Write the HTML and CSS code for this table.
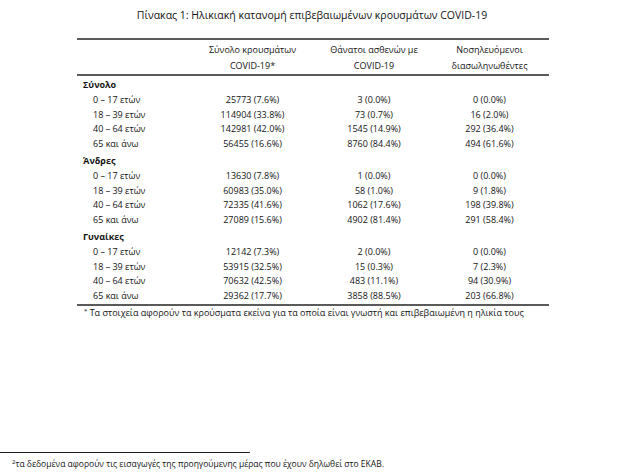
FILE: index.html
```html
<!DOCTYPE html>
<html lang="el">
<head>
<meta charset="utf-8">
<link rel="stylesheet" href="styles.css">
</head>
<body>
<div class="page">
  <h1 class="title">Πίνακας 1: Ηλικιακή κατανομή επιβεβαιωμένων κρουσμάτων COVID-19</h1>
  <table class="data">
    <colgroup>
      <col class="c-label"><col class="c-a"><col class="c-b"><col class="c-c">
    </colgroup>
    <thead>
      <tr>
        <th></th>
        <th>Σύνολο κρουσμάτων<br>COVID-19*</th>
        <th>Θάνατοι ασθενών με<br>COVID-19</th>
        <th>Νοσηλευόμενοι<br>διασωληνωθέντες</th>
      </tr>
    </thead>
    <tbody>
      <tr class="sec"><td>Σύνολο</td><td></td><td></td><td></td></tr>
      <tr><td>0 – 17 ετών</td><td>25773 (7.6%)</td><td>3 (0.0%)</td><td>0 (0.0%)</td></tr>
      <tr><td>18 – 39 ετών</td><td>114904 (33.8%)</td><td>73 (0.7%)</td><td>16 (2.0%)</td></tr>
      <tr><td>40 – 64 ετών</td><td>142981 (42.0%)</td><td>1545 (14.9%)</td><td>292 (36.4%)</td></tr>
      <tr><td>65 και άνω</td><td>56455 (16.6%)</td><td>8760 (84.4%)</td><td>494 (61.6%)</td></tr>
      <tr class="sec"><td>Άνδρες</td><td></td><td></td><td></td></tr>
      <tr><td>0 – 17 ετών</td><td>13630 (7.8%)</td><td>1 (0.0%)</td><td>0 (0.0%)</td></tr>
      <tr><td>18 – 39 ετών</td><td>60983 (35.0%)</td><td>58 (1.0%)</td><td>9 (1.8%)</td></tr>
      <tr><td>40 – 64 ετών</td><td>72335 (41.6%)</td><td>1062 (17.6%)</td><td>198 (39.8%)</td></tr>
      <tr><td>65 και άνω</td><td>27089 (15.6%)</td><td>4902 (81.4%)</td><td>291 (58.4%)</td></tr>
      <tr class="sec"><td>Γυναίκες</td><td></td><td></td><td></td></tr>
      <tr><td>0 – 17 ετών</td><td>12142 (7.3%)</td><td>2 (0.0%)</td><td>0 (0.0%)</td></tr>
      <tr><td>18 – 39 ετών</td><td>53915 (32.5%)</td><td>15 (0.3%)</td><td>7 (2.3%)</td></tr>
      <tr><td>40 – 64 ετών</td><td>70632 (42.5%)</td><td>483 (11.1%)</td><td>94 (30.9%)</td></tr>
      <tr class="last"><td>65 και άνω</td><td>29362 (17.7%)</td><td>3858 (88.5%)</td><td>203 (66.8%)</td></tr>
    </tbody>
  </table>
  <p class="note"><sup>*</sup> Τα στοιχεία αφορούν τα κρούσματα εκείνα για τα οποία είναι γνωστή και επιβεβαιωμένη η ηλικία τους</p>
  <div class="spacer"></div>
  <div class="footer">
    <div class="footer-rule"></div>
    <p class="footer-text"><sup>2</sup>τα δεδομένα αφορούν τις εισαγωγές της προηγούμενης μέρας που έχουν δηλωθεί στο ΕΚΑΒ.</p>
  </div>
</div>
</body>
</html>
```

FILE: styles.css
```css
html, body {
  margin: 0;
  padding: 0;
  background: #ffffff;
}
body {
  font-family: "Open Sans", "Noto Sans", sans-serif;
  color: #141414;
  width: 619px;
  height: 474px;
  overflow: hidden;
}
.page {
  display: flex;
  flex-direction: column;
  height: 474px;
}
.title {
  margin: 8px 0 0 0;
  font-size: 10.5px;
  font-weight: 400;
  text-align: center;
  line-height: 14px;
  padding-left: 5px;
}
.data {
  margin: 16px 0 0 77px;
  width: 472px;
  border-collapse: collapse;
  font-size: 9px;
  table-layout: fixed;
}
.c-label { width: 110px; }
.c-a { width: 131px; }
.c-b { width: 112px; }
.c-c { width: 119px; }
.data thead tr {
  border-top: 2px solid #5a5a5a;
  border-bottom: 2px solid #5a5a5a;
}
.data th {
  font-weight: 400;
  line-height: 15.5px;
  padding: 2px 0 1px 0;
  text-align: center;
}
.data td {
  padding: 0;
  line-height: 14.8px;
  text-align: center;
  white-space: nowrap;
}
.data td:first-child {
  text-align: left;
  padding-left: 16px;
}
.data tr.sec td {
  font-weight: 700;
  padding-top: 2px;
  line-height: 14.8px;
}
.data tr.sec td:first-child {
  padding-left: 6px;
}
.data tbody tr.sec:first-child td {
  padding-top: 2px;
}
.data tr.last {
  border-bottom: 2px solid #5a5a5a;
}
.note {
  margin: 1px 0 0 84px;
  font-size: 9px;
  line-height: 12px;
}
.note sup, .footer-text sup {
  font-size: 6px;
  vertical-align: 3px;
  line-height: 0;
}
.spacer { flex: 1; }
.footer {
  padding-bottom: 5px;
}
.footer-rule {
  width: 250px;
  height: 1px;
  background: #222;
  margin-bottom: 5px;
}
.footer-text {
  margin: 0 0 0 12px;
  font-size: 8.5px;
  line-height: 11px;
}
```
